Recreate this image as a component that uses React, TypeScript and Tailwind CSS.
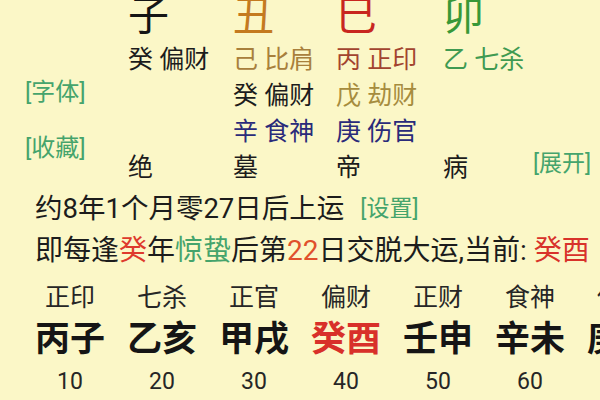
const font = { fontFamily: 'Roboto, "Noto Sans CJK SC", sans-serif' }

const dayun = [
  { shen: '正印', gz: '丙子', age: '10', red: false },
  { shen: '七杀', gz: '乙亥', age: '20', red: false },
  { shen: '正官', gz: '甲戌', age: '30', red: false },
  { shen: '偏财', gz: '癸酉', age: '40', red: true },
  { shen: '正财', gz: '壬申', age: '50', red: false },
  { shen: '食神', gz: '辛未', age: '60', red: false },
  { shen: '伤官', gz: '庚午', age: '70', red: false },
]

export default function App() {
  return (
    <div
      className="w-[600px] h-[400px] overflow-hidden bg-[#fbf7c7] text-[#1c1c1c] flex flex-col"
      style={font}
    >
      {/* 四柱 */}
      <div className="flex h-[188px] shrink-0">
        <div className="w-[128px] shrink-0 pl-[25px] pt-[77px] flex flex-col gap-[26px] text-[24px] leading-[30px] text-[#45a46c]">
          <span>[字体]</span>
          <span>[收藏]</span>
        </div>

        <div className="w-[405px] shrink-0 -mt-[10px] grid grid-cols-[105px_103px_107px_90px] grid-rows-[52px_36px_36px_36px_36px] items-center text-[25px] leading-[36px] whitespace-nowrap">
          <span className="text-[41px] leading-[52px] text-[#151515]">子</span>
          <span className="text-[41px] leading-[52px] text-[#c47a1f]">丑</span>
          <span className="text-[41px] leading-[52px] text-[#c8261f]">巳</span>
          <span className="text-[41px] leading-[52px] text-[#389838]">卯</span>

          <span>癸 偏财</span>
          <span className="text-[#a8803c]">己 比肩</span>
          <span className="text-[#a2442f]">丙 正印</span>
          <span className="text-[#3f9a52]">乙 七杀</span>

          <span />
          <span>癸 偏财</span>
          <span className="text-[#a68c3e]">戊 劫财</span>
          <span />

          <span />
          <span className="text-[#2a2b7a]">辛 食神</span>
          <span className="text-[#2a2b7a]">庚 伤官</span>
          <span />

          <span>绝</span>
          <span>墓</span>
          <span>帝</span>
          <span>病</span>
        </div>

        <div className="flex-1 flex flex-col justify-end pb-[6px] text-[23px] leading-[36px] text-[#45a46c]">
          <span>[展开]</span>
        </div>
      </div>

      {/* 起运 */}
      <div className="h-[42px] shrink-0 flex items-center pl-[35px] text-[27.5px] whitespace-nowrap">
        <span>约8年1个月零27日后上运</span>
        <span className="ml-[16px] text-[23px] text-[#45a46c]">[设置]</span>
      </div>
      <div className="h-[42px] shrink-0 flex items-center pl-[35px] text-[28px] whitespace-nowrap">
        <span>
          即每逢<span className="text-[#de3a2c]">癸</span>年
          <span className="text-[#45a46c]">惊蛰</span>后第
          <span className="text-[#e0502c]">22</span>日交脱大运,当前:{' '}
          <span className="text-[#d8322a]">癸酉</span>
        </span>
      </div>

      {/* 大运 */}
      <div className="mt-[8px] flex pl-[24px] whitespace-nowrap">
        {dayun.map((d) => (
          <div key={d.gz} className="w-[92px] shrink-0 flex flex-col items-center">
            <span className="h-[36px] leading-[36px] text-[25px] text-[#262626]">{d.shen}</span>
            <span
              className={`h-[48px] leading-[48px] text-[35px] font-bold ${d.red ? 'text-[#d8302a]' : 'text-[#151515]'}`}
            >
              {d.gz}
            </span>
            <span className="h-[36px] leading-[36px] text-[23px] text-[#262626]">{d.age}</span>
          </div>
        ))}
      </div>
    </div>
  )
}
